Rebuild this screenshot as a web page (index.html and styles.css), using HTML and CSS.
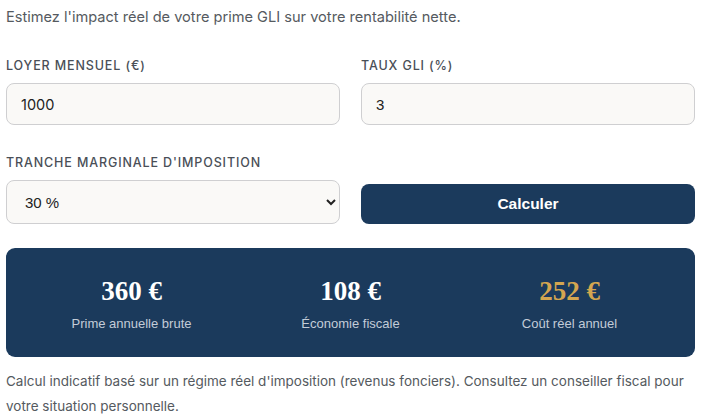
FILE: index.html
```html
<html>
  <head>
    <meta charset="utf-8">
    <link rel="stylesheet" href="styles.css">
  </head>
  <body>
    <div class="gli-calc">
      <p class="gli-calc__intro">Estimez l'impact réel de votre prime GLI sur votre rentabilité nette.</p>

      <div class="gli-calc__form">
        <div class="field">
          <label class="field__label" for="Iloyer">Loyer mensuel (€)</label>
          <input id="Iloyer" class="field__input field__input--first" type="text" value="1000" />
        </div>
        <div class="field">
          <label class="field__label" for="Itaux">Taux GLI (%)</label>
          <input id="Itaux" class="field__input" type="text" value="3" />
        </div>
        <div class="field">
          <label class="field__label" for="Itmi">Tranche marginale d'imposition</label>
          <select id="Itmi" class="field__input field__select">
            <option>11 %</option>
            <option selected>30 %</option>
            <option>41 %</option>
            <option>45 %</option>
          </select>
        </div>
        <div class="field field--button">
          <button class="gli-calc__btn">Calculer</button>
        </div>
      </div>

      <div class="results">
        <div class="results__item">
          <div class="results__value">360 €</div>
          <div class="results__label">Prime annuelle brute</div>
        </div>
        <div class="results__item">
          <div class="results__value">108 €</div>
          <div class="results__label">Économie fiscale</div>
        </div>
        <div class="results__item">
          <div class="results__value results__value--gold">252 €</div>
          <div class="results__label">Coût réel annuel</div>
        </div>
      </div>

      <p class="gli-calc__note">Calcul indicatif basé sur un régime réel d'imposition (revenus fonciers). Consultez un conseiller fiscal pour votre situation personnelle.</p>
    </div>
  </body>
</html>
```

FILE: styles.css
```css
body {
  margin: 0;
  background: #fff;
  font-family: "Inter", "DejaVu Sans", sans-serif;
  color: #555a60;
}
.gli-calc {
  padding: 5px 9px 0 6px;
}
.gli-calc__intro {
  margin: 0;
  font-size: 14.6px;
  line-height: 24px;
}
.gli-calc__form {
  display: grid;
  grid-template-columns: 1fr 1fr;
  column-gap: 21px;
  row-gap: 29px;
  margin-top: 28px;
}
.field {
  display: flex;
  flex-direction: column;
}
.field--button {
  justify-content: flex-end;
}
.field__label {
  display: block;
  font-size: 12.5px;
  line-height: 18px;
  font-weight: 500;
  letter-spacing: 0.07em;
  text-transform: uppercase;
  color: #4a4f57;
  margin-bottom: 8px;
}
.field__input {
  box-sizing: border-box;
  height: 42px;
  padding: 0 14px;
  border: 1px solid #cfcfd1;
  border-radius: 8px;
  background: #faf9f7;
  font-family: "Liberation Sans", Arial, sans-serif;
  font-size: 15px;
  color: #222;
  outline: none;
}
.field__input--first {
  font-family: "Inter", "DejaVu Sans", sans-serif;
  font-size: 14.5px;
}
.field__select {
  height: 44px;
  margin-top: 0;
  padding: 0 10px 0 14px;
}
.gli-calc__btn {
  height: 40px;
  border: none;
  border-radius: 8px;
  background: #1b3a5c;
  color: #fff;
  font-family: "Liberation Sans", Arial, sans-serif;
  font-size: 15.5px;
  font-weight: bold;
}
.results {
  display: grid;
  grid-template-columns: 1fr 1fr 1fr;
  margin-top: 24px;
  padding: 27px 16px 24px;
  background: #1b3a5c;
  border-radius: 9px;
  text-align: center;
}
.results__value {
  font-family: "Liberation Serif", "DejaVu Serif", serif;
  font-weight: bold;
  font-size: 27px;
  line-height: 32px;
  color: #fff;
}
.results__value--gold {
  color: #d4a650;
}
.results__label {
  margin-top: 8px;
  font-family: "Liberation Sans", Arial, sans-serif;
  font-size: 13px;
  line-height: 18px;
  color: #c3ccd8;
}
.gli-calc__note {
  margin: 12px 0 0;
  font-size: 13.5px;
  line-height: 25px;
}
```
